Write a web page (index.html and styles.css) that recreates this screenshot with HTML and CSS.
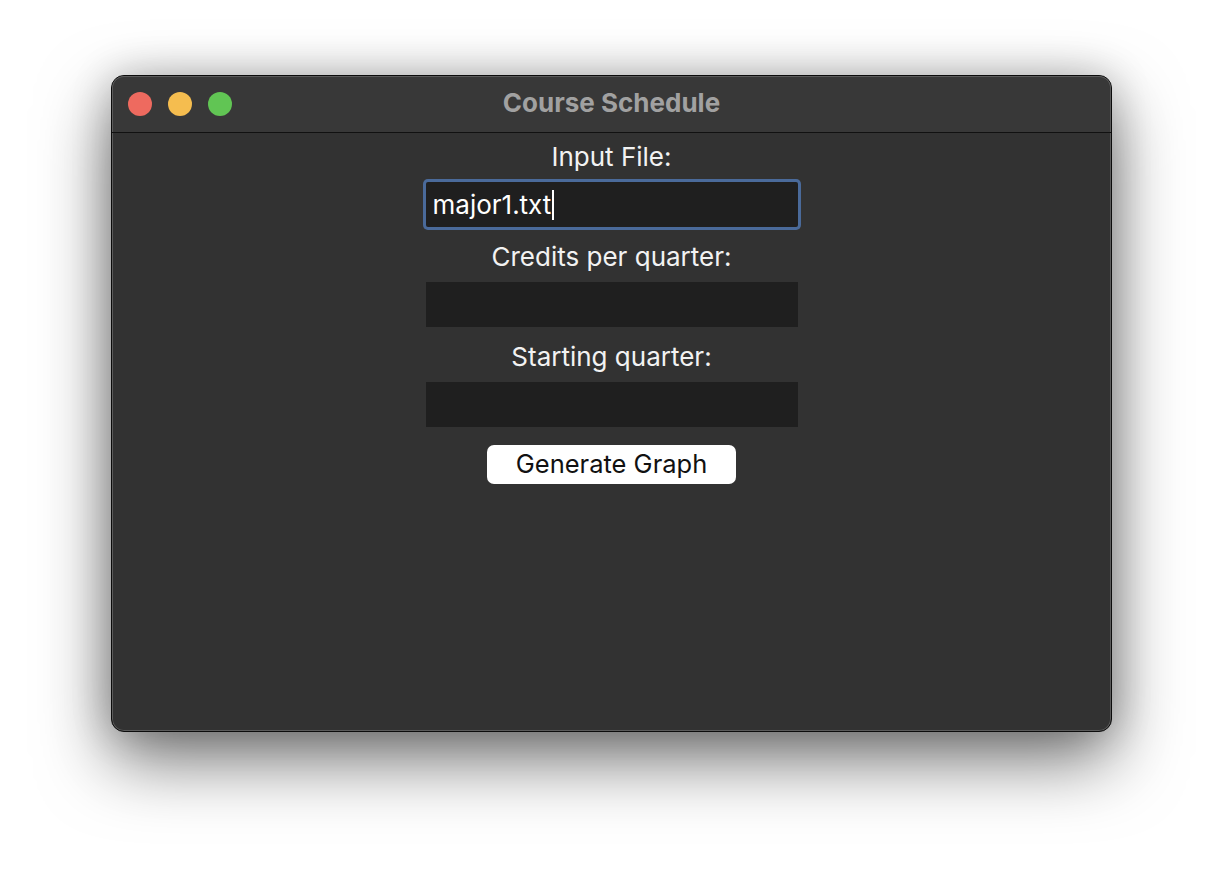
FILE: index.html
```html
<!DOCTYPE html>
<html>
<head>
<meta charset="utf-8">
<title>Course Schedule</title>
<link rel="stylesheet" href="styles.css">
</head>
<body>
<div class="window">
  <div class="titlebar">
    <div class="lights">
      <span class="light red"></span>
      <span class="light yellow"></span>
      <span class="light green"></span>
    </div>
    <div class="title">Course Schedule</div>
  </div>
  <div class="content">
    <div class="label first">Input File:</div>
    <div class="field focused"><span class="value">major1.txt</span><span class="caret"></span></div>
    <div class="label">Credits per quarter:</div>
    <div class="field"></div>
    <div class="label">Starting quarter:</div>
    <div class="field"></div>
    <button class="btn">Generate Graph</button>
  </div>
</div>
</body>
</html>
```

FILE: styles.css
```css
html, body {
  margin: 0;
  padding: 0;
  background: #ffffff;
  width: 1224px;
  height: 880px;
  overflow: hidden;
}

body {
  padding-top: 75px;
  padding-left: 111px;
  box-sizing: border-box;
  font-family: "Inter", "Liberation Sans", sans-serif;
}

.window {
  width: 1001px;
  height: 657px;
  box-sizing: border-box;
  border: 1px solid #0c0c0c;
  border-radius: 13px;
  background: #323232;
  box-shadow:
    inset 0 0 0 1px #5b5b5b,
    0 28px 70px rgba(0, 0, 0, 0.55),
    0 0 40px rgba(0, 0, 0, 0.2);
  display: flex;
  flex-direction: column;
  overflow: hidden;
}

.titlebar {
  position: relative;
  height: 56px;
  flex: none;
  background: #383838;
  border-bottom: 1px solid #111111;
  border-radius: 12px 12px 0 0;
  box-shadow: inset 0 1px 0 #5b5b5b, inset 1px 0 0 #5b5b5b, inset -1px 0 0 #5b5b5b;
  display: flex;
  align-items: center;
  justify-content: center;
}

.lights {
  position: absolute;
  left: 16px;
  top: 16px;
  display: flex;
  gap: 16px;
}

.light {
  width: 24px;
  height: 24px;
  border-radius: 50%;
  display: block;
}

.red { background: #ee6a5f; }
.yellow { background: #f5bd4f; }
.green { background: #61c554; }

.title {
  color: #a1a1a1;
  font-weight: 700;
  font-size: 26px;
  margin-top: -3px;
}

.content {
  flex: 1;
  display: flex;
  flex-direction: column;
  align-items: center;
  padding-top: 9px;
}

.label {
  color: #f2f2f2;
  font-size: 26px;
  line-height: 30px;
  height: 30px;
  margin-top: 15px;
  margin-bottom: 10px;
  white-space: nowrap;
}

.label.first {
  margin-top: 0;
}

.field {
  width: 372px;
  height: 45px;
  flex: none;
  background: #1f1f1f;
  box-sizing: border-box;
  display: flex;
  align-items: center;
  padding-left: 7px;
  color: #ffffff;
  font-size: 26px;
}

.field.focused {
  box-shadow: 0 0 0 3px #4a6a9a;
  border-radius: 2px;
}

.caret {
  display: block;
  width: 2px;
  height: 30px;
  background: #ffffff;
  margin-left: 1px;
}

.btn {
  margin-top: 18px;
  width: 249px;
  height: 39px;
  border: none;
  border-radius: 7px;
  background: #ffffff;
  color: #111111;
  font-family: "Inter", "Liberation Sans", sans-serif;
  font-size: 25.5px;
  padding: 0 0 3px 0;
  box-sizing: border-box;
}
```
